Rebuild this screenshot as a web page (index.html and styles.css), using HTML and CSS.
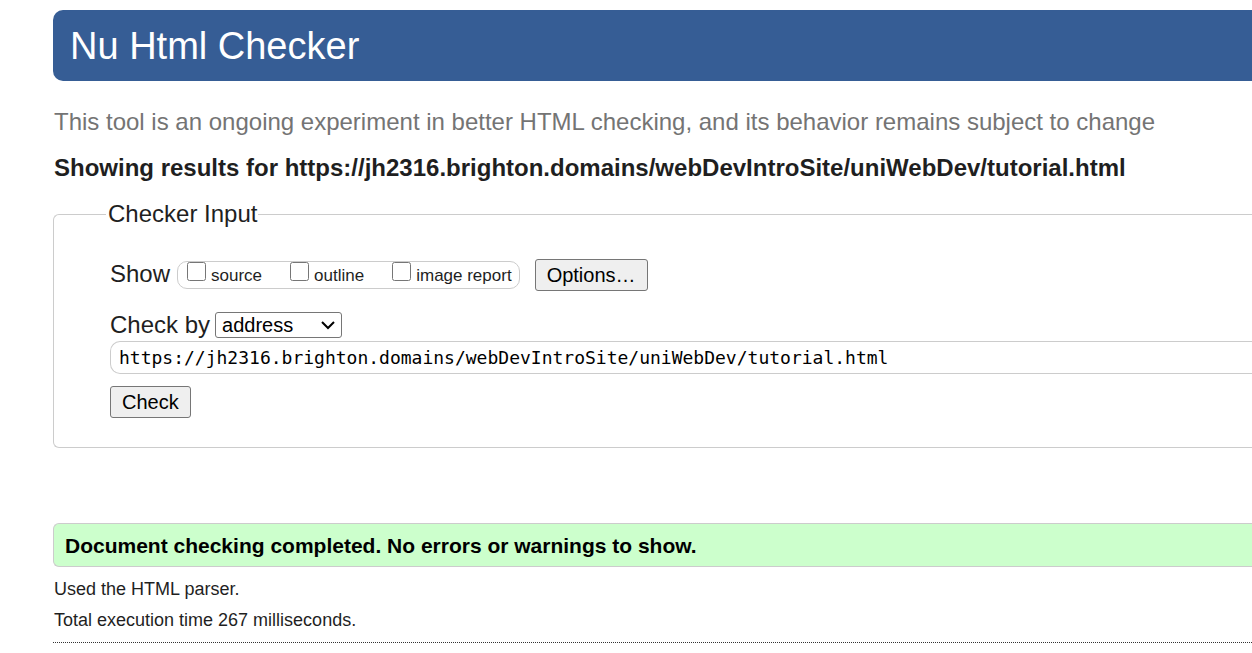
FILE: index.html
```html
<!DOCTYPE html>
<html lang="en">
<head>
<meta charset="utf-8">
<title>Nu Html Checker</title>
<link rel="stylesheet" href="styles.css">
</head>
<body>
<header class="banner"><h1 class="banner-title">Nu Html Checker</h1></header>
<main class="content">
  <p class="tagline">This tool is an ongoing experiment in better HTML checking, and its behavior remains subject to change</p>
  <h2 class="results-title">Showing results for https://jh2316.brighton.domains/webDevIntroSite/uniWebDev/tutorial.html</h2>
  <form>
    <fieldset class="checker">
      <legend class="checker-legend">Checker Input</legend>
      <div class="show-row">
        <span class="label">Show</span>
        <div class="show-options">
          <label class="option"><input class="tick" type="checkbox" name="source"><span class="option-text">source</span></label>
          <label class="option"><input class="tick" type="checkbox" name="outline"><span class="option-text">outline</span></label>
          <label class="option"><input class="tick" type="checkbox" name="imagereport"><span class="option-text">image report</span></label>
        </div>
        <button class="button" type="button">Options…</button>
      </div>
      <div class="method-row">
        <label class="label" for="method">Check by</label>
        <span class="select-wrap">
          <select class="method" id="method"><option>address</option><option>file upload</option><option>text input</option></select>
          <svg class="chevron" viewBox="0 0 14 10" aria-hidden="true"><path d="M1 2l6 6 6-6"/></svg>
        </span>
      </div>
      <input class="address" type="text" aria-label="Address" spellcheck="false" value="https://jh2316.brighton.domains/webDevIntroSite/uniWebDev/tutorial.html">
      <button class="button" type="submit">Check</button>
    </fieldset>
  </form>
  <p class="success">Document checking completed. No errors or warnings to show.</p>
  <p class="note">Used the HTML parser.</p>
  <p class="note">Total execution time 267 milliseconds.</p>
  <hr class="rule">
</main>
</body>
</html>
```
FILE: styles.css
```css
* { box-sizing: border-box; }
body {
  margin: 0;
  padding: 10px 0 0 53px;
  overflow: hidden;
  background: #fff;
  color: #1f1f1f;
  font-family: "Liberation Sans", Arial, sans-serif;
}
.banner {
  padding: 14px 17px 13px;
  border-radius: 10px 0 0 10px;
  background: #365d95;
  color: #fff;
}
.banner-title { margin: 0; font-size: 38px; font-weight: 400; line-height: 44px; }
.tagline, .results-title {
  margin: 0;
  padding-left: 1px;
  font-size: 24px;
  line-height: 28px;
  white-space: nowrap;
}
.tagline { margin-top: 27px; color: #747474; }
.results-title { margin-top: 18px; }
.checker {
  min-width: 0;
  margin: 18px 0 0;
  padding: 31px 0 29px 56px;
  border: 1px solid #ccc;
  border-right: 0;
  border-radius: 6px 0 0 6px;
}
.checker-legend { margin-left: -4px; padding: 0 1px 0 2px; font-size: 24px; line-height: 28px; }
.label { font-size: 24px; line-height: 28px; }
.show-row { display: flex; align-items: center; }
.show-row .label { padding-bottom: 2px; }
.show-options {
  display: flex;
  align-items: center;
  gap: 28px;
  height: 28px;
  margin: 0 15px 0 7px;
  padding: 0 7px 3px 9px;
  border: 1px solid #ccc;
  border-radius: 10px;
}
.option { display: flex; gap: 5px; }
.tick { width: 19px; height: 19px; margin: 0; }
.option-text { padding-top: 4px; font-size: 17px; line-height: 20px; }
.button {
  height: 32px;
  padding: 0 11px;
  border: 1px solid #767676;
  border-radius: 3px;
  background: #efefef;
  color: #000;
  font: 20px/28px "Liberation Sans", Arial, sans-serif;
}
.method-row { display: flex; align-items: center; gap: 5px; margin: 20px 0 2px; }
.method-row .label { padding-bottom: 1px; line-height: 27px; }
.select-wrap { display: grid; align-items: center; }
.method {
  grid-area: 1 / 1;
  appearance: none;
  width: 127px;
  height: 26px;
  padding: 0 6px;
  border: 1px solid #767676;
  border-radius: 3px;
  background: #fff;
  color: #000;
  font: 20px/24px "Liberation Sans", Arial, sans-serif;
}
.chevron {
  grid-area: 1 / 1;
  justify-self: end;
  width: 14px;
  height: 10px;
  margin-right: 7px;
  fill: none;
  stroke: #000;
  stroke-width: 2;
  pointer-events: none;
}
.address {
  display: block;
  width: 100%;
  height: 33px;
  margin-bottom: 12px;
  padding: 0 8px;
  border: 1px solid #ccc;
  border-right: 0;
  border-radius: 10px 0 0 10px;
  color: #000;
  font: 18px/24px "DejaVu Sans Mono", monospace;
}
.success {
  margin: 75px 0 0;
  padding: 10px 11px 8px;
  border: 1px solid #ccc;
  border-right: 0;
  border-radius: 6px 0 0 6px;
  background: #ccffcc;
  color: #000;
  font-size: 21px;
  font-weight: 700;
  line-height: 24px;
}
.note { margin: 11px 0 0; padding-left: 1px; font-size: 18px; line-height: 20px; }
.success + .note { margin-top: 12px; }
.rule { margin: 12px 0 0; border: 0; border-top: 1px dotted #333; }
```
